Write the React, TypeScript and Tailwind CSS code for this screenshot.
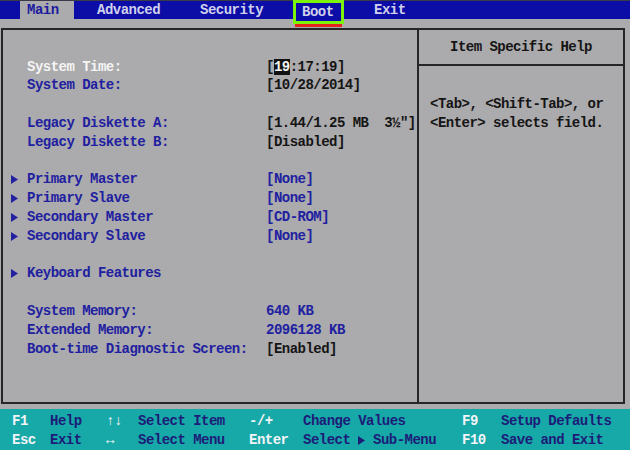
import React from "react";

const Arrow = () => (
  <svg width="7" height="9" viewBox="0 0 7 9" className="inline-block">
    <path d="M0 0 L7 4.5 L0 9 Z" fill="#2222a0" />
  </svg>
);

type Row = { label?: string; value?: React.ReactNode; arrow?: boolean; white?: boolean; blueValue?: boolean };

const rows: Row[] = [
  {
    label: "System Time:",
    white: true,
    value: (
      <>
        [<span className="bg-[#111] text-[#f2f2f2]">19</span>:17:19]
      </>
    ),
  },
  { label: "System Date:", value: "[10/28/2014]" },
  {},
  { label: "Legacy Diskette A:", value: '[1.44/1.25 MB  3½"]' },
  { label: "Legacy Diskette B:", value: "[Disabled]" },
  {},
  { label: "Primary Master", value: "[None]", arrow: true, blueValue: true },
  { label: "Primary Slave", value: "[None]", arrow: true, blueValue: true },
  { label: "Secondary Master", value: "[CD-ROM]", arrow: true, blueValue: true },
  { label: "Secondary Slave", value: "[None]", arrow: true, blueValue: true },
  {},
  { label: "Keyboard Features", arrow: true },
  {},
  { label: "System Memory:", value: "640 KB", blueValue: true },
  { label: "Extended Memory:", value: "2096128 KB", blueValue: true },
  { label: "Boot-time Diagnostic Screen:", value: "[Enabled]" },
];

const footer = [
  ["F1", "Help", "↑↓", "Select Item", "-/+", "Change Values", "F9", "Setup Defaults"],
  ["Esc", "Exit", "↔", "Select Menu", "Enter", "", "F10", "Save and Exit"],
];

const App = () => {
  return (
    <div
      className="w-[630px] h-[450px] bg-[#abaaac] flex flex-col overflow-hidden text-[14px] tracking-[-0.525px] font-bold leading-[18.8px] whitespace-pre"
      style={{ fontFamily: '"Liberation Mono", "DejaVu Sans Mono", monospace' }}
    >
      <div className="h-[1px] bg-[#3a3a48]" />
      <div className="h-[18px] bg-[#0c0ca6] flex items-center text-[#cfd0ec] pl-[20px]">
        <div className="w-[54px] h-full bg-[#abaaac] text-[#1c1ca0] pl-[7px] flex items-center">Main</div>
        <div className="ml-[23px] w-[103px]">Advanced</div>
        <div className="w-[93px]">Security</div>
        <div className="w-[51px] h-full relative">
          <div className="absolute left-0 right-0 top-[-1px] h-[24px] border-[3px] border-[#7cf40a] bg-[#0c0ca6] pl-[6px] flex items-center">
            Boot
          </div>
          <div className="absolute left-[2px] right-[2px] top-[23px] h-[3px] bg-[#e5241e]" />
        </div>
        <div className="ml-[30px]">Exit</div>
      </div>
      <div className="h-[9px]" />
      <div className="ml-[1px] w-[624px] h-[377px] border-2 border-[#262626] flex">
        <div className="w-[416px] border-r-2 border-[#262626] pt-[27.6px] pl-[4px]">
          {rows.map((r, i) => (
            <div key={i} className="flex h-[18.8px] items-center">
              <div className="w-[20px] flex items-center pl-[4px]">{r.arrow && <Arrow />}</div>
              <div className={`w-[239px] ${r.white ? "text-[#f4f4f4]" : "text-[#2020a0]"}`}>{r.label}</div>
              <div className={r.blueValue ? "text-[#2020a0]" : "text-[#151515]"}>{r.value}</div>
            </div>
          ))}
        </div>
        <div className="flex-1 flex flex-col text-[#151515]">
          <div className="h-[36px] border-b-2 border-[#262626] flex items-center justify-center">
            Item Specific Help
          </div>
          <div className="pt-[29px] pl-[11px]">
            <div>&lt;Tab&gt;, &lt;Shift-Tab&gt;, or</div>
            <div>&lt;Enter&gt; selects field.</div>
          </div>
        </div>
      </div>
      <div className="h-[5px]" />
      <div className="flex-1 bg-[#17a8a8] pt-[3px] pl-[12px]">
        {footer.map((f, i) => (
          <div key={i} className="flex h-[19px] items-center">
            <div className="w-[38px] text-[#f2f4f8]">{f[0]}</div>
            <div className="w-[56px] text-[#1c1c78]">{f[1]}</div>
            <div className="w-[32px] text-[#f2f4f8]">{f[2]}</div>
            <div className="w-[111px] text-[#1c1c78]">{f[3]}</div>
            <div className="w-[54px] text-[#f2f4f8]">{f[4]}</div>
            <div className="w-[159px] text-[#1c1c78]">
              {i === 0 ? (
                f[5]
              ) : (
                <>
                  Select{" "}
                  <svg width="7" height="9" viewBox="0 0 7 9" className="inline-block align-[-1px]">
                    <path d="M0 0 L7 4.5 L0 9 Z" fill="#1c1c78" />
                  </svg>{" "}
                  Sub-Menu
                </>
              )}
            </div>
            <div className="w-[39px] text-[#f2f4f8]">{f[6]}</div>
            <div className="text-[#1c1c78]">{f[7]}</div>
          </div>
        ))}
      </div>
    </div>
  );
};

export default App;
